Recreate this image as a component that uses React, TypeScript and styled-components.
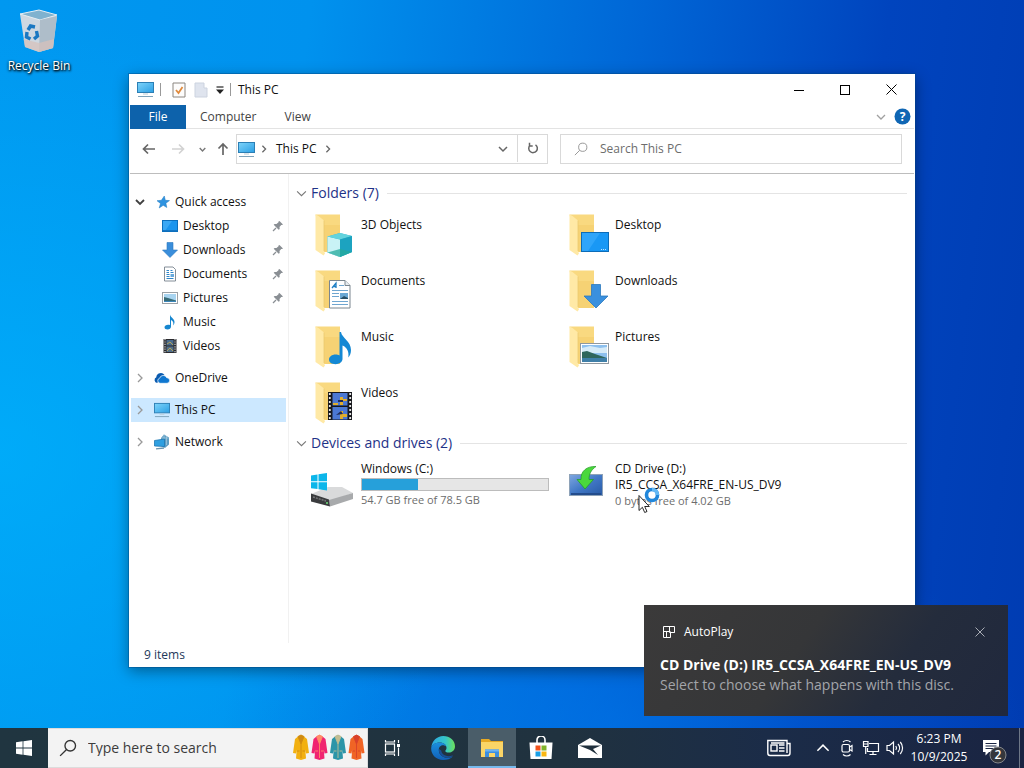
import React from 'react';
import styled, { createGlobalStyle, css } from 'styled-components';

const GlobalStyle = createGlobalStyle`
  *, *::before, *::after { box-sizing: border-box; }
  body { margin: 0; font-family: "Open Sans", "Noto Sans", sans-serif; font-size: 12px; line-height: 16px; color: #111; }
  button, input { font: inherit; color: inherit; }
  button { margin: 0; padding: 0; border: 0; background: none; cursor: default; }
  ul { list-style: none; margin: 0; padding: 0; }
  svg { display: block; flex: none; }
  h1, h2, p { margin: 0; font-weight: 400; }
`;

const Screen = styled.div`
  display: flex;
  flex-direction: column;
  height: 100vh;
  overflow: hidden;
`;

const Desktop = styled.main`
  position: relative;
  flex: 1;
  min-height: 0;
  background:
    radial-gradient(ellipse 50% 60% at 0% 62%, rgba(0, 184, 255, 0.6), rgba(0, 184, 255, 0) 100%),
    radial-gradient(ellipse 40% 30% at 60% 100%, rgba(0, 124, 240, 0.5), rgba(0, 124, 240, 0) 100%),
    linear-gradient(97deg, #0098f0 0%, #0092ee 28%, #0066d6 58%, #0044be 80%, #003cb2 100%);
`;

const DesktopIcon = styled.button`
  display: flex;
  flex-direction: column;
  align-items: center;
  gap: 4px;
  width: 78px;
  padding-top: 6px;
  color: #fff;
  text-shadow: 1px 1px 2px #000, 0 1px 3px #000;
`;

/* Explorer window */
const Window = styled.section`
  position: absolute;
  inset: 74px 109px 61px 129px;
  display: flex;
  flex-direction: column;
  padding: 0 1px;
  background: #fff;
  box-shadow: 0 0 0 1px rgba(0, 70, 130, 0.4), 0 4px 14px rgba(0, 0, 0, 0.4);
`;

const TitleBar = styled.header`
  display: flex;
  align-items: center;
  height: 31px;
  padding-left: 7px;
`;

const Divider = styled.span`
  width: 1px;
  height: 13px;
  background: #999;
`;

const QuickTools = styled.div`
  display: flex;
  padding: 0 2px 0 7px;
`;

const QuickButton = styled.button<{ $narrow?: boolean }>`
  display: grid;
  place-items: center;
  width: ${p => (p.$narrow ? 16 : 22)}px;
  height: 22px;
`;

const WindowIcon = styled.span`
  padding-right: 6px;
`;

const WindowTitle = styled.h1`
  flex: 1;
  padding-left: 7px;
  font-size: 12px;
  line-height: 16px;
`;

const CaptionButton = styled.button`
  display: grid;
  place-items: center;
  width: 46px;
  height: 31px;
`;

const RibbonTabs = styled.nav`
  display: flex;
  align-items: center;
  height: 24px;
  border-bottom: 1px solid #e3e3e3;
`;

const Tab = styled.button<{ $primary?: boolean }>`
  height: 24px;
  padding: 0 14px;
  color: #444;
  ${p => p.$primary && css`
    width: 56px;
    background: #0d62ab;
    color: #fff;
  `}
`;

const RibbonTools = styled.div`
  display: flex;
  align-items: center;
  gap: 8px;
  margin-left: auto;
  padding-right: 3px;
`;

const NavBar = styled.div`
  display: flex;
  align-items: center;
  height: 45px;
  padding: 0 12px 4px 6px;
  border-bottom: 1px solid #bdbdbd;
`;

const NavButton = styled.button<{ $w: number }>`
  display: grid;
  place-items: center;
  width: ${p => p.$w}px;
  height: 30px;
`;

const AddressBox = styled.div`
  display: flex;
  align-items: center;
  flex: 310 1 0;
  height: 30px;
  border: 1px solid #d9d9d9;
`;

const Location = styled.span`
  display: flex;
  align-items: center;
  gap: 5px;
  padding-left: 1px;
`;

const Crumb = styled.button`
  padding: 0 7px 0 8px;
`;

const AddressEnd = styled.div`
  display: flex;
  margin-left: auto;
`;

const RefreshButton = styled(NavButton)`
  height: 28px;
  border-left: 1px solid #d9d9d9;
`;

const SearchBox = styled.label`
  display: flex;
  align-items: center;
  gap: 12px;
  flex: 327 1 0;
  height: 30px;
  margin-left: 12px;
  padding-left: 13px;
  border: 1px solid #d9d9d9;
`;

const SearchInput = styled.input`
  flex: 1;
  min-width: 0;
  padding: 0;
  border: 0;
  outline: 0;
  background: transparent;
  &::placeholder { color: #6d6d6d; opacity: 1; }
`;

const Body = styled.div`
  display: flex;
  flex: 1;
  min-height: 0;
`;

const Sidebar = styled.nav`
  width: 159px;
  padding: 16px 2px 0 1px;
  border-right: 1px solid #f1f1f1;
`;

const TreeRow = styled.button<{ $child?: boolean; $spaced?: boolean; $selected?: boolean }>`
  display: flex;
  align-items: center;
  gap: 5px;
  width: 100%;
  height: 24px;
  padding-left: ${p => (p.$child ? 31 : 4)}px;
  padding-right: 2px;
  margin-top: ${p => (p.$spaced ? 8 : 0)}px;
  background: ${p => (p.$selected ? '#cce8ff' : 'transparent')};
  text-align: left;
`;

const TreeChevron = styled.span`
  width: 14px;
`;

const TreeLabel = styled.span`
  flex: 1;
`;

const Content = styled.div`
  flex: 1;
  padding: 9px 7px 0;
`;

const GroupHeader = styled.h2`
  display: flex;
  align-items: center;
  gap: 4px;
  height: 20px;
  margin-bottom: 6px;
  font-size: 14px;
  line-height: 20px;
  color: #1e3287;
  &::after {
    content: "";
    flex: 1;
    height: 1px;
    margin-left: 4px;
    background: #e4e4e4;
  }
`;

const ItemGrid = styled.ul`
  display: grid;
  grid-template-columns: repeat(auto-fill, 254px);
  grid-auto-rows: 56px;
  padding-left: 11px;
`;

const Item = styled.li`
  display: flex;
  gap: 6px;
  padding-top: 2px;
`;

const FolderName = styled.span`
  padding-top: 6px;
`;

const DriveInfo = styled.div`
  position: relative;
  width: 188px;
`;

const DriveMeta = styled.p`
  font-size: 11px;
  color: #6d6d6d;
`;

const Usage = styled.div`
  height: 13px;
  margin: 1px 0;
  border: 1px solid #bcbcbc;
  background: #e6e6e6;
`;

const UsageFill = styled.div`
  height: 100%;
  background: #26a0da;
`;

const Pointer = styled.div`
  position: absolute;
  left: 22px;
  top: 25px;
`;

const StatusBar = styled.footer`
  height: 24px;
  padding: 4px 14px;
  color: #1e395b;
`;

/* Notification */
const Toast = styled.aside`
  position: absolute;
  right: 16px;
  bottom: 12px;
  width: 364px;
  height: 111px;
  padding: 17px 16px;
  background: linear-gradient(125deg, #3b3a3a 0%, #353638 42%, #242c3c 68%, #20283d 100%);
  color: #fff;
`;

const ToastHeader = styled.div`
  display: flex;
  align-items: center;
  gap: 9px;
  height: 20px;
  margin-bottom: 13px;
  padding-left: 3px;
`;

const ToastClose = styled.button`
  display: grid;
  place-items: center;
  width: 24px;
  height: 20px;
  margin-left: auto;
`;

const ToastText = styled.p<{ $strong?: boolean }>`
  font-size: 14px;
  line-height: 20px;
  font-weight: ${p => (p.$strong ? 700 : 400)};
  color: ${p => (p.$strong ? '#fff' : '#a3a5aa')};
  white-space: nowrap;
`;

/* Taskbar */
const Taskbar = styled.footer`
  display: flex;
  height: 40px;
  background: linear-gradient(90deg, #203540 0%, #20323f 55%, #1b2c48 75%, #1a2442 100%);
  color: #fff;
`;

const TaskButton = styled.button<{ $w?: number; $active?: boolean }>`
  display: grid;
  place-items: center;
  width: ${p => p.$w ?? 48}px;
  height: 40px;
  background: ${p => (p.$active ? '#4a5d69' : 'transparent')};
  box-shadow: ${p => (p.$active ? 'inset 0 -2px #76b9ed' : 'none')};
`;

const TaskSearch = styled.label`
  display: flex;
  align-items: center;
  gap: 11px;
  width: 320px;
  padding: 0 1px 0 11px;
  border: 1px solid #dcdcdc;
  border-left: 0;
  background: #f3f3f3;
  color: #333;
  font-size: 14px;
  ${SearchInput}::placeholder { color: #3c3c3c; }
`;

const Pinned = styled.div`
  display: flex;
  gap: 1px;
  padding-left: 2px;
`;

const Tray = styled.div`
  display: flex;
  margin-left: auto;
`;

const TrayGap = styled.div`
  width: 12px;
`;

const Clock = styled.button`
  width: 64px;
  line-height: 18px;
  white-space: nowrap;
`;

const ShowDesktop = styled.button`
  width: 5px;
  border-left: 1px solid #6e7787;
`;

/* Glyphs */
const PcIcon = ({ size = 17 }: { size?: number }) => (
  <svg width={size} height={size} viewBox="0 0 17 17">
    <defs>
      <linearGradient id="pc" x1="0" y1="0" x2="1" y2="1">
        <stop offset="0" stopColor="#7fd4fa" /><stop offset="1" stopColor="#2b9fe4" />
      </linearGradient>
    </defs>
    <rect x="0.5" y="1.5" width="16" height="10" fill="url(#pc)" stroke="#2c7fb5" />
    <path d="M6 13h5" stroke="#b9cbd6" />
    <path d="M1 15.5h15" stroke="#7fa3ba" />
  </svg>
);

const Chevron = ({ dir, color = '#666', size = 9, weight = 1.3 }: { dir: 'down' | 'right' | 'up'; color?: string; size?: number; weight?: number }) => (
  <svg width={size} height={size} viewBox="0 0 10 10" fill="none" stroke={color} strokeWidth={weight}>
    <path d={dir === 'down' ? 'M1 3l4 4 4-4' : dir === 'up' ? 'M1 7l4-4 4 4' : 'M3 1l4 4-4 4'} />
  </svg>
);

const Arrow = ({ kind, color }: { kind: 'left' | 'right' | 'up'; color: string }) => (
  <svg width="14" height="14" viewBox="0 0 14 14" fill="none" stroke={color} strokeWidth="1.7">
    <path d={kind === 'left' ? 'M13 7H1.500M6 2.500L1.500 7 6 11.500' : kind === 'right' ? 'M1 7h11.500M8 2.500L12.500 7 8 11.500' : 'M7 13V2M2.500 6.500L7 2l4.500 4.500'} />
  </svg>
);

const Magnifier = ({ size, color, weight = 1 }: { size: number; color: string; weight?: number }) => (
  <svg width={size} height={size} viewBox="0 0 16 16" fill="none" stroke={color} strokeWidth={weight}>
    <circle cx="10" cy="6" r="4.700" /><path d="M6.500 9.500L1 15" />
  </svg>
);

const Pin = () => (
  <svg width="12" height="12" viewBox="0 0 12 12">
    <path d="M7.500 1l3.500 3.500-1 .6-.8-.2-1.700 2 .2 2-1 .8-5-5 .9-.8 1.900.2 2-1.800L6.500 1.600z" fill="#8a8f94" />
    <path d="M4 8L1 11" stroke="#8a8f94" strokeWidth="1.200" />
  </svg>
);

const DesktopGlyph = () => (
  <svg width="16" height="16" viewBox="0 0 16 16">
    <rect x="0.500" y="2.500" width="15" height="11" fill="#1b95ee" stroke="#0c6fbd" />
    <path d="M1 3h9L3 13H1z" fill="#3aa8f5" /><path d="M1 12.500h14" stroke="#1476c4" />
  </svg>
);

const DownloadGlyph = () => (
  <svg width="16" height="16" viewBox="0 0 16 16">
    <path d="M5 .5h6V8h4.500L8 15.500.5 8H5z" fill="#3a8edb" stroke="#2b78c0" strokeWidth=".6" />
  </svg>
);

const DocGlyph = () => (
  <svg width="16" height="16" viewBox="0 0 16 16">
    <path d="M2.500 1h8.500l2.500 2.500V15h-11z" fill="#fff" stroke="#77828c" strokeWidth=".9" />
    <path d="M4.500 4.500h2.500M8.500 4.500h2M4.500 6.500H7M8.500 6.500h3M4.500 8.500h3M4.500 10.500h3M4.500 12.500h7" stroke="#2f86c9" />
    <rect x="8.500" y="8" width="3.500" height="3" fill="#67a9dc" />
  </svg>
);

const PictureGlyph = () => (
  <svg width="16" height="16" viewBox="0 0 16 16">
    <rect x=".5" y="2.500" width="15" height="11" fill="#fff" stroke="#9ba1a6" />
    <rect x="2" y="4" width="12" height="8" fill="#a8d4f0" />
    <path d="M2 7l4 1 8 2.500V12H2z" fill="#376b76" /><path d="M2 11.500h12" stroke="#3b86bb" />
  </svg>
);

const NoteGlyph = () => (
  <svg width="16" height="16" viewBox="0 0 16 16">
    <path d="M8 .5c.4 3 4.500 4 4.500 7.500 0 1.500-.6 2.700-1.400 3.500.7-2.500.2-4.500-2.100-5.500v6.800c0 1.500-1.600 2.700-3.400 2.700S2.500 14.700 2.500 13.300s1.700-2.600 3.500-2.600c.8 0 1.500.2 2 .4z" fill="#1686cf" />
  </svg>
);

const FilmGlyph = () => (
  <svg width="16" height="16" viewBox="0 0 16 16">
    <rect x="1.500" y="1" width="13" height="14" fill="#2b2b2f" />
    <path d="M3 1v14M13 1v14" stroke="#c9ccd0" strokeWidth="1.200" strokeDasharray="1.200 1.200" />
    <rect x="4.500" y="2" width="7" height="5.500" fill="#4a6b8e" /><rect x="4.500" y="8.500" width="7" height="5.500" fill="#54708a" />
    <path d="M5 6l3-2 3 3M5 13l3-3 3 3" stroke="#b4a257" fill="none" />
  </svg>
);

const StarGlyph = () => (
  <svg width="16" height="16" viewBox="0 0 16 16">
    <path d="M10.300 2l1 4.300 4.200.3-3.600 2.600.9 4.300-3.600-2.200-4 2.700 1.300-4.500L3 6.700l4.400-.4z" fill="#2e93e0" stroke="#1c78c0" strokeWidth=".5" />
  </svg>
);

const CloudGlyph = () => (
  <svg width="16" height="16" viewBox="0 0 16 16">
    <path d="M3.200 13A3 3 0 0 1 2.300 7.300 4.500 4.500 0 0 1 10.500 5L6 9z" fill="#0a5bb0" />
    <path d="M6 13.300a2.600 2.600 0 0 1-.3-5.100 3.700 3.700 0 0 1 7-.5A2.800 2.800 0 0 1 13 13.300z" fill="#0f77d0" stroke="#fff" strokeWidth=".7" />
  </svg>
);

const NetworkGlyph = () => (
  <svg width="16" height="16" viewBox="0 0 16 16">
    <path d="M10 .5l5 3v7l-4 3.500-4-2V4z" fill="#5f9dc2" />
    <path d="M10 .5v5M12.500 2v9M7.500 4h7" stroke="#a6cde2" fill="none" strokeWidth=".7" />
    <path d="M.5 6.500l10-1.500v7.500l-10-.5z" fill="#2f9fe0" stroke="#1e77b3" strokeWidth=".8" />
    <path d="M2 14.800l8-.8" stroke="#6c94ad" strokeWidth="1.300" />
  </svg>
);

const FolderBase = () => (
  <>
    <path d="M8.500 3.500H33V41H17z" fill="#f9d980" />
    <path d="M17 14h16v27H17z" fill="#f3cd6c" opacity=".6" />
    <path d="M8.500 3.500l3 1.500 5.500 4.500V40l1 2.500-1.500 2-8-5.500z" fill="#ffe9a6" />
    <path d="M17 9.500V40" stroke="#ebc96f" strokeWidth=".8" />
  </>
);

const overlays: Record<string, React.ReactNode> = {
  '3D Objects': (
    <>
      <path d="M20.500 25.500L33 22l12 3v16L33 46l-12.500-4.500z" fill="#35b6cc" />
      <path d="M20.500 25.500L33 28.500V46l-12.500-4.500z" fill="#c9f3f6" />
      <path d="M20.500 25.500L33 22l12 3-12 3.500z" fill="#63d3dd" />
      <path d="M33 28.500L45 25v16L33 46z" fill="#1ca3c0" />
      <path d="M20.500 41.500L33 38l12 3-12 5z" fill="#25a99b" opacity=".75" />
    </>
  ),
  Desktop: (
    <>
      <rect x="20.500" y="21.500" width="27" height="19" fill="#1998f5" stroke="#0c6cb8" />
      <path d="M21 22h18L27 40h-6z" fill="#2fa5fa" />
      <path d="M40 38.500h6" stroke="#bfe3ff" strokeDasharray="1 1" />
    </>
  ),
  Documents: (
    <>
      <path d="M22.500 13.500H38l5 5v22.500H22.500z" fill="#fff" stroke="#7b868f" />
      <path d="M38 13.500v5h5" fill="#e8edf1" stroke="#7b868f" />
      <path d="M25 21l4-5v5M26.500 19.500H29" stroke="#1f7fc4" fill="none" strokeWidth="1.300" />
      <path d="M32 18.500h5M25 23.500h16M25 26.500h7M25 29.500h7M25 34.500h16M25 37.500h16" stroke="#6fa6d0" />
      <rect x="33" y="26" width="8" height="6" fill="#6aa8d4" /><path d="M33 32l4-3 4 2v1z" fill="#274f66" />
    </>
  ),
  Downloads: <path d="M30.500 17.500h9V29H47L35 41 23 29h7.500z" fill="#3a90de" stroke="#2c78bd" strokeWidth=".8" />,
  Music: (
    <path d="M32.500 9h1.500c.8 6 10 9 10 18 0 3-1 5.500-2.700 7.500.9-5.500-1-10-5.800-12V36c0 3-3.200 5.200-7 5.200S22 39.300 22 36.500s3-5 6.500-5c1.500 0 3 .3 4 .9z" fill="#1488d4" />
  ),
  Pictures: (
    <>
      <rect x="19.500" y="20.500" width="28" height="20" fill="#fff" stroke="#8f989f" />
      <rect x="21" y="22" width="25" height="17" fill="#8dc0ee" />
      <path d="M21 25l8-2 10 2 7-1v6H21z" fill="#d6ebf8" />
      <path d="M21 29l5-1 8 3 12 4v2H21z" fill="#2f665c" /><path d="M21 35h25v4H21z" fill="#3f7fa8" />
    </>
  ),
  Videos: (
    <>
      <rect x="21" y="13" width="24" height="28" fill="#17181c" />
      <path d="M22.800 14v27M43.200 14v27" stroke="#e6e6e6" strokeWidth="1.800" strokeDasharray="2 2" />
      <rect x="25.500" y="14" width="15" height="12.500" fill="#4b78d3" /><rect x="25.500" y="28" width="15" height="12.500" fill="#4b78d3" />
      <path d="M26 24h5v2h-5zM33 18h3v8h-3zM36 20h4v2h-4zM33 32h3v8h-3zM36 35h4v3h-4z" fill="#e1ae2d" />
      <path d="M31 21h5v2h-5zM29 36l5-4 2 3z" fill="#1f2a58" />
    </>
  ),
};

const FolderIcon = ({ name }: { name: string }) => (
  <svg width="48" height="48" viewBox="0 0 48 48"><FolderBase />{overlays[name]}</svg>
);

const HardDriveIcon = () => (
  <svg width="48" height="48" viewBox="0 0 48 48">
    <path d="M4 33l17-7h14l11 6-23 8z" fill="#d9dadb" />
    <path d="M22 39l24-7v6l-23 7.500z" fill="#a8aaac" />
    <path d="M4 32.500L22 38.500l1 7L4 40.500z" fill="#3a3c3e" />
    <path d="M6 36l13 4" stroke="#77797b" strokeWidth="1.500" strokeDasharray="2 1" />
    <circle cx="20" cy="42" r="1" fill="#71e07b" />
    <path d="M4 14.500l6.500-1v6.800H4zM11.500 13.300L20 12v8.300h-8.500zM4 21.300h6.500v6.800L4 27.200zM11.500 21.300H20v8.200l-8.500-1.300z" fill="#0cb6ea" />
  </svg>
);

const DiscIcon = () => (
  <svg width="48" height="48" viewBox="0 0 48 48">
    <defs>
      <linearGradient id="disc" x1="0" y1="0" x2="1" y2="1">
        <stop offset="0" stopColor="#7fa7e0" /><stop offset=".5" stopColor="#4178c6" /><stop offset="1" stopColor="#2859a5" />
      </linearGradient>
    </defs>
    <rect x="8.500" y="13.500" width="33" height="21" fill="url(#disc)" stroke="#8ea2b8" />
    <path d="M10 33h30" stroke="#234c8c" strokeWidth="2" />
    <path d="M35 5.500C26 5 19.500 10 20 18.500h-4L24 28l8.500-9.500H28C28 13 30 9 35 5.500z" fill="#4ad83c" stroke="#1f9a22" strokeWidth=".7" />
  </svg>
);

const BinIcon = () => (
  <svg width="48" height="48" viewBox="0 0 48 48">
    <path d="M5 8l37 2-4 32-14 4-14-5z" fill="#ced8e1" />
    <path d="M5 8l19-4 18 5-17 5z" fill="#7fb2cf" stroke="#e6eef3" />
    <path d="M25 14l17-4-4 32-14 4z" fill="#aebdc9" />
    <path d="M8.500 33l15.500 4 15-4-1 9-14 4-14-5z" fill="#d6c2bb" opacity=".75" />
    <g fill="none" stroke="#1a78c2" strokeWidth="3.400">
      <path d="M13 24l2.500-4 4.500 1" /><path d="M21.500 25l1 5-3.500 3" /><path d="M15.500 33l-4-2 .5-5" />
    </g>
  </svg>
);

const PointerIcon = () => (
  <svg width="26" height="28" viewBox="0 0 26 28">
    <circle cx="15" cy="9" r="5.500" fill="#fff" stroke="#2187db" strokeWidth="3.600" />
    <path d="M15 3.500a5.500 5.500 0 0 1 5.500 5.500" fill="none" stroke="#63b8f4" strokeWidth="3.600" />
    <path d="M2 9.500v15l3.400-3.200 2.300 5.200 2.300-1-2.300-5h4.600z" fill="#fff" stroke="#111" strokeWidth=".9" />
  </svg>
);

const WindowsLogo = () => (
  <svg width="16" height="16" viewBox="0 0 16 16" fill="#fff">
    <path d="M0 2.200l6.600-.9v6.300H0zM7.400 1.200L16 0v7.600H7.400zM0 8.400h6.600v6.300L0 13.800zM7.400 8.400H16V16l-8.600-1.200z" />
  </svg>
);

const Coats = () => (
  <svg width="74" height="28" viewBox="0 0 74 28">
    {[['#f2b010', '#cf8a12'], ['#f02470', '#ff8b66'], ['#2c95a8', '#c2bd92'], ['#f06425', '#d8412a']].map(([a, b], i) => (
      <g key={a} transform={`translate(${i * 18.5} 0)`}>
        <path d="M6 2.500L9 1l3 1.500 3 2.500 2 14-3 .5-.7-4 .7 9-5 1.500-5-1.500.7-9-.7 4-3-.5L3 5z" fill={a} />
        <path d="M6 2.500L9 10l3-7.500L9 1zM9 10v14M5 17h2.500M10.500 17H13" fill={b} stroke={b} strokeWidth=".9" />
      </g>
    ))}
  </svg>
);

const TaskViewIcon = () => (
  <svg width="22" height="18" viewBox="0 0 22 18" fill="none" stroke="#fff" strokeWidth="1.200">
    <rect x="2.500" y="5" width="9" height="8" /><path d="M2.500 1v2h9V1M2.500 17v-2h9v2M15.500 1v3M15.500 8.500V17" />
    <path d="M14 5h3v3h-3z" fill="#fff" stroke="none" />
  </svg>
);

const EdgeIcon = () => (
  <svg width="24" height="24" viewBox="0 0 24 24">
    <defs>
      <linearGradient id="edgeTop" x1="0" y1="0" x2="1" y2="0">
        <stop offset="0" stopColor="#2ba7e4" /><stop offset=".6" stopColor="#35c5c8" /><stop offset="1" stopColor="#6ce05a" />
      </linearGradient>
      <linearGradient id="edgeBody" x1="0" y1="0" x2="0" y2="1">
        <stop offset="0" stopColor="#1b8fdd" /><stop offset="1" stopColor="#1160b7" />
      </linearGradient>
    </defs>
    <path d="M.3 11.500C.8 5 6 0 12.200 0 19 0 24 4.600 24 10.200c0 4-3 6.300-6.300 6.300-2.400 0-3.800-1-3.400-1.800.9-1 1.200-1.800 1.200-3C15.500 8.800 12.500 6.500 8.800 6.500 4.500 6.500 1 8.800.3 11.500z" fill="url(#edgeTop)" />
    <path d="M.2 12C.6 8.700 4 6.500 8.800 6.500c3.500 0 6 1.800 6.600 4.200-.9-1-2.200-1.500-3.400-1.500-3 0-4.200 2.400-4.200 5 0 4.400 4 7.600 8.800 7.600 2 0 3.700-.6 5.200-1.400C19.800 22.600 16 24 12 24 5.200 24-.3 18.600.2 12z" fill="url(#edgeBody)" />
    <path d="M8 13c-.8 4.800 3.300 8.800 8.600 8.800 2 0 3.700-.6 4.900-1.500.5-.4.2-1-.3-.8-4.200 1.600-10.300.2-11-5z" fill="#174f96" />
  </svg>
);

const ExplorerIcon = () => (
  <svg width="24" height="22" viewBox="0 0 24 22">
    <path d="M1 2h8l2 2h12v5H1z" fill="#e8a923" /><path d="M1 5h22v15H1z" fill="#fbd567" />
    <path d="M5 20v-7.500h14V20h-4v-4H9v4z" fill="#3d8fe0" /><path d="M5 12.500h14v2H5z" fill="#6db3f2" />
  </svg>
);

const StoreIcon = () => (
  <svg width="24" height="24" viewBox="0 0 24 24">
    <path d="M8 7V4a4 4 0 0 1 8 0v3" fill="none" stroke="#fff" strokeWidth="1.600" />
    <path d="M.5 6.500h23L22.500 23h-21z" fill="#fff" />
    <path d="M6.500 9.500h5v5h-5z" fill="#f1511b" /><path d="M12.500 9.500h5v5h-5z" fill="#80b32b" />
    <path d="M6.500 15.500h5v5h-5z" fill="#1a9fe6" /><path d="M12.500 15.500h5v5h-5z" fill="#f9b713" />
  </svg>
);

const MailIcon = () => (
  <svg width="24" height="20" viewBox="0 0 24 20">
    <path d="M0 7L12 0l12 7v13H0z" fill="#fff" />
    <path d="M1 7.500h22L15 11l5 6-8-5z" fill="#20303d" />
  </svg>
);

const NewsIcon = () => (
  <svg width="24" height="18" viewBox="0 0 24 18" fill="none" stroke="#fff" strokeWidth="1.400">
    <path d="M3 1.500h17v3h3V14c0 1.500-.8 2.500-2.200 2.500H3C1.700 16.500.8 15.500.8 14V1.500zM20 4.500V14" />
    <rect x="4" y="6" width="6" height="6" /><path d="M12 6h5.500M12 9h5.500M12 12h5.500M4 4h13.500" />
  </svg>
);

const MeetIcon = () => (
  <svg width="14" height="18" viewBox="0 0 14 18" fill="none" stroke="#fff" strokeWidth="1.200">
    <rect x="2" y="5.500" width="7.500" height="7.500" rx="1.500" /><path d="M9.500 8l2.500-1.500v5.500L9.500 10.500M3 3c2-2 5.500-2 7.500 0M3 15.500c2 2 5.500 2 7.500 0" />
  </svg>
);

const EthernetIcon = () => (
  <svg width="18" height="16" viewBox="0 0 18 16" fill="none" stroke="#fff" strokeWidth="1.200">
    <path d="M7 3.500h9.500v8H5.500V8M11 11.500v3M7.500 14.500h7M1.500 1.500h4.500v5H1.500zM3.700 6.500v7.500M1.500 4H6" />
  </svg>
);

const VolumeIcon = () => (
  <svg width="18" height="16" viewBox="0 0 18 16" fill="none" stroke="#fff" strokeWidth="1.200">
    <path d="M1 5.500h2.500L7.500 2v12l-4-3.500H1zM9.800 6c.9 1.200.9 2.800 0 4M12 4c2 2.300 2 5.700 0 8M14.300 2c3 3.500 3 8.500 0 12" />
  </svg>
);

const ActionIcon = () => (
  <svg width="32" height="32" viewBox="0 0 32 32">
    <path d="M4 8h16v12H10l-3.500 3.500V20H4z" fill="#fff" />
    <path d="M6.500 11.500h11M6.500 14h11M6.500 16.500h11" stroke="#1b2644" />
    <circle cx="19" cy="23" r="8" fill="#35373c" stroke="#85878b" />
    <text x="19" y="27" fontSize="12" fontWeight="600" fill="#fff" textAnchor="middle">2</text>
  </svg>
);

const AutoPlayIcon = () => (
  <svg width="12" height="12" viewBox="0 0 12 12" fill="none" stroke="#fff">
    <path d="M.5.5h11v6h-4v5h-7zM.5 5.500h7M6.500.5v6M3.500 5.500v6M6.500 6.500h5" />
  </svg>
);

const quickAccess = [
  { label: 'Desktop', icon: <DesktopGlyph />, pinned: true },
  { label: 'Downloads', icon: <DownloadGlyph />, pinned: true },
  { label: 'Documents', icon: <DocGlyph />, pinned: true },
  { label: 'Pictures', icon: <PictureGlyph />, pinned: true },
  { label: 'Music', icon: <NoteGlyph />, pinned: false },
  { label: 'Videos', icon: <FilmGlyph />, pinned: false },
];

const roots = [
  { label: 'OneDrive', icon: <CloudGlyph />, selected: false },
  { label: 'This PC', icon: <PcIcon size={16} />, selected: true },
  { label: 'Network', icon: <NetworkGlyph />, selected: false },
];

const folders = ['3D Objects', 'Desktop', 'Documents', 'Downloads', 'Music', 'Pictures', 'Videos'];

const Explorer = () => (
  <Window aria-label="This PC">
    <TitleBar>
      <WindowIcon><PcIcon /></WindowIcon>
      <Divider />
      <QuickTools>
        <QuickButton aria-label="Properties">
          <svg width="14" height="16" viewBox="0 0 14 16">
            <path d="M1 1h12v14H1z" fill="#fdfcfb" stroke="#8b8680" /><path d="M4 8l2.500 3L10.500 5" fill="none" stroke="#e08a3c" strokeWidth="1.800" />
          </svg>
        </QuickButton>
        <QuickButton aria-label="New folder">
          <svg width="14" height="16" viewBox="0 0 14 16"><path d="M1 1h9v5h3v9H1z" fill="#dfe4ee" stroke="#ccd3df" /></svg>
        </QuickButton>
        <QuickButton $narrow aria-label="Customize toolbar">
          <svg width="8" height="8" viewBox="0 0 8 8"><path d="M.5 1h7" stroke="#222" strokeWidth="1.200" /><path d="M0 3.500h8L4 8z" fill="#222" /></svg>
        </QuickButton>
      </QuickTools>
      <Divider />
      <WindowTitle>This PC</WindowTitle>
      <CaptionButton aria-label="Minimize">
        <svg width="10" height="10" viewBox="0 0 10 10"><path d="M0 5.500h10" stroke="#000" /></svg>
      </CaptionButton>
      <CaptionButton aria-label="Maximize">
        <svg width="10" height="10" viewBox="0 0 10 10"><rect x=".5" y=".5" width="9" height="9" fill="none" stroke="#000" /></svg>
      </CaptionButton>
      <CaptionButton aria-label="Close">
        <svg width="11" height="11" viewBox="0 0 11 11"><path d="M.5.5l10 10M10.500.5l-10 10" stroke="#000" /></svg>
      </CaptionButton>
    </TitleBar>
    <RibbonTabs>
      <Tab $primary>File</Tab>
      <Tab>Computer</Tab>
      <Tab>View</Tab>
      <RibbonTools>
        <button aria-label="Expand ribbon"><Chevron dir="down" color="#a0a0a0" size={10} /></button>
        <button aria-label="Help">
          <svg width="17" height="17" viewBox="0 0 17 17">
            <circle cx="8.500" cy="8.500" r="8" fill="#0f66b4" />
            <text x="8.500" y="13" fontSize="12" fontWeight="700" fill="#fff" textAnchor="middle">?</text>
          </svg>
        </button>
      </RibbonTools>
    </RibbonTabs>
    <NavBar>
      <NavButton $w={26} aria-label="Back"><Arrow kind="left" color="#666" /></NavButton>
      <NavButton $w={32} aria-label="Forward"><Arrow kind="right" color="#d2d2d2" /></NavButton>
      <NavButton $w={16} aria-label="Recent locations"><Chevron dir="down" color="#777" size={7} weight={2} /></NavButton>
      <NavButton $w={26} aria-label="Up"><Arrow kind="up" color="#666" /></NavButton>
      <AddressBox>
        <Location><PcIcon /><Chevron dir="right" size={8} weight={1.6} /></Location>
        <Crumb>This PC</Crumb>
        <Chevron dir="right" size={8} weight={1.6} />
        <AddressEnd>
          <NavButton $w={28} aria-label="Previous locations"><Chevron dir="down" size={10} weight={1.5} /></NavButton>
          <RefreshButton $w={30} aria-label="Refresh">
            <svg width="12" height="12" viewBox="0 0 12 12" fill="none" stroke="#666" strokeWidth="1.500">
              <path d="M8.500 2.800A4.300 4.300 0 1 1 3 3.300M2.500.8V4H5.700" />
            </svg>
          </RefreshButton>
        </AddressEnd>
      </AddressBox>
      <SearchBox>
        <Magnifier size={14} color="#8c8c8c" />
        <SearchInput type="text" placeholder="Search This PC" aria-label="Search This PC" />
      </SearchBox>
    </NavBar>
    <Body>
      <Sidebar aria-label="Navigation pane">
        <TreeRow>
          <TreeChevron><Chevron dir="down" color="#404040" size={10} weight={1.8} /></TreeChevron>
          <StarGlyph /><TreeLabel>Quick access</TreeLabel>
        </TreeRow>
        {quickAccess.map(q => (
          <TreeRow key={q.label} $child>
            {q.icon}<TreeLabel>{q.label}</TreeLabel>{q.pinned && <Pin />}
          </TreeRow>
        ))}
        {roots.map(r => (
          <TreeRow key={r.label} $spaced $selected={r.selected}>
            <TreeChevron><Chevron dir="right" color="#999" size={10} /></TreeChevron>
            {r.icon}<TreeLabel>{r.label}</TreeLabel>
          </TreeRow>
        ))}
      </Sidebar>
      <Content>
        <GroupHeader><Chevron dir="down" color="#777" size={11} weight={1} />Folders (7)</GroupHeader>
        <ItemGrid>
          {folders.map(f => (
            <Item key={f}><FolderIcon name={f} /><FolderName>{f}</FolderName></Item>
          ))}
        </ItemGrid>
        <GroupHeader><Chevron dir="down" color="#777" size={11} weight={1} />Devices and drives (2)</GroupHeader>
        <ItemGrid>
          <Item>
            <HardDriveIcon />
            <DriveInfo>
              <p>Windows (C:)</p>
              <Usage role="progressbar" aria-label="Space used" aria-valuenow={30}><UsageFill style={{ width: '30%' }} /></Usage>
              <DriveMeta>54.7 GB free of 78.5 GB</DriveMeta>
            </DriveInfo>
          </Item>
          <Item>
            <DiscIcon />
            <DriveInfo>
              <p>CD Drive (D:)</p>
              <p>IR5_CCSA_X64FRE_EN-US_DV9</p>
              <DriveMeta>0 bytes free of 4.02 GB</DriveMeta>
              <Pointer><PointerIcon /></Pointer>
            </DriveInfo>
          </Item>
        </ItemGrid>
      </Content>
    </Body>
    <StatusBar>9 items</StatusBar>
  </Window>
);

const AutoPlayToast = () => (
  <Toast>
    <ToastHeader>
      <AutoPlayIcon />
      AutoPlay
      <ToastClose aria-label="Dismiss">
        <svg width="10" height="10" viewBox="0 0 10 10"><path d="M.5.5l9 9M9.500.5l-9 9" stroke="#a9adb5" /></svg>
      </ToastClose>
    </ToastHeader>
    <ToastText $strong>CD Drive (D:) IR5_CCSA_X64FRE_EN-US_DV9</ToastText>
    <ToastText>Select to choose what happens with this disc.</ToastText>
  </Toast>
);

export default function App() {
  return (
    <Screen>
      <GlobalStyle />
      <Desktop>
        <DesktopIcon><BinIcon />Recycle Bin</DesktopIcon>
        <Explorer />
        <AutoPlayToast />
      </Desktop>
      <Taskbar>
        <TaskButton aria-label="Start"><WindowsLogo /></TaskButton>
        <TaskSearch>
          <Magnifier size={18} color="#333" weight={1.2} />
          <SearchInput type="text" placeholder="Type here to search" aria-label="Type here to search" />
          <Coats />
        </TaskSearch>
        <Pinned>
          <TaskButton aria-label="Task View"><TaskViewIcon /></TaskButton>
          <TaskButton aria-label="Microsoft Edge"><EdgeIcon /></TaskButton>
          <TaskButton $active aria-label="File Explorer"><ExplorerIcon /></TaskButton>
          <TaskButton aria-label="Microsoft Store"><StoreIcon /></TaskButton>
          <TaskButton aria-label="Mail"><MailIcon /></TaskButton>
        </Pinned>
        <Tray>
          <TaskButton $w={40} aria-label="News"><NewsIcon /></TaskButton>
          <TrayGap />
          <TaskButton $w={24} aria-label="Show hidden icons"><Chevron dir="up" color="#fff" size={14} weight={1.1} /></TaskButton>
          <TaskButton $w={24} aria-label="Meet Now"><MeetIcon /></TaskButton>
          <TaskButton $w={24} aria-label="Network"><EthernetIcon /></TaskButton>
          <TaskButton $w={24} aria-label="Volume"><VolumeIcon /></TaskButton>
          <Clock>6:23 PM<br />10/9/2025</Clock>
          <TaskButton aria-label="Notifications"><ActionIcon /></TaskButton>
          <ShowDesktop aria-label="Show desktop" />
        </Tray>
      </Taskbar>
    </Screen>
  );
}
